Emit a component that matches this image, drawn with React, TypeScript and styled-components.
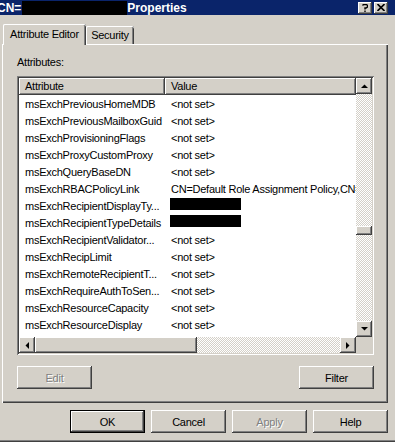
import React from "react";
import styled, { createGlobalStyle, css } from "styled-components";

const face = "#d4d0c8";

const GlobalStyle = createGlobalStyle`
  html, body {
    margin: 0;
    padding: 0;
    background: ${face};
  }
`;

const raised = css`
  background: ${face};
  box-shadow: inset -1px -1px #404040, inset 1px 1px #fff,
    inset -2px -2px #808080, inset 2px 2px ${face};
`;

const checker = css`
  background-color: #fff;
  background-image: repeating-conic-gradient(${face} 0% 25%, #fff 0% 50%);
  background-size: 2px 2px;
`;

const Window = styled.div`
  width: 395px;
  height: 442px;
  box-sizing: border-box;
  background: ${face};
  display: flex;
  flex-direction: column;
  box-shadow: inset 0 -1px #404040, inset 0 -2px #808080;
  font-family: "Liberation Sans", Arial, sans-serif;
  font-size: 11px;
  letter-spacing: -0.25px;
  color: #000;
  overflow: hidden;
`;

const TitleBar = styled.div`
  height: 15px;
  display: flex;
  align-items: center;
  background: #0a246a;
  color: #fff;
  padding-right: 7px;
`;

const TitleText = styled.div`
  display: flex;
  align-items: center;
  margin-left: -3px;
  font-size: 12px;
  font-weight: bold;
  letter-spacing: 0;
  white-space: nowrap;
`;

const TitleRedact = styled.span`
  display: inline-block;
  width: 105px;
  height: 14px;
  background: #000;
  margin-left: 1px;
`;

const CaptionButtons = styled.div`
  margin-left: auto;
  display: flex;
  gap: 2px;
`;

const CaptionButton = styled.div`
  ${raised};
  width: 14px;
  height: 12px;
  display: flex;
  align-items: center;
  justify-content: center;
  color: #000;
`;

const Body = styled.div`
  flex: 1;
  display: flex;
  flex-direction: column;
  padding: 0 7px 0 2px;
`;

const TabStrip = styled.div`
  display: flex;
  align-items: flex-end;
  height: 21px;
  margin-top: 9px;
  margin-bottom: -1px;
  padding-left: 1px;
  position: relative;
  z-index: 1;
`;

const Tab = styled.div<{ $active?: boolean; $w: number }>`
  width: ${(p) => p.$w}px;
  height: ${(p) => (p.$active ? 21 : 18)}px;
  margin-bottom: ${(p) => (p.$active ? 0 : 1)}px;
  box-sizing: border-box;
  background: ${face};
  border-top-left-radius: 2px;
  border-top-right-radius: 2px;
  box-shadow: inset 1px 0 #fff, inset 0 1px #fff, inset -1px 0 #404040,
    inset -2px 0 #808080;
  display: flex;
  justify-content: center;
  padding-top: ${(p) => (p.$active ? 4 : 3)}px;
  line-height: 13px;
  white-space: nowrap;
`;

const TabPage = styled.div`
  height: 359px;
  box-sizing: border-box;
  padding: 11px 14px 0 15px;
  display: flex;
  flex-direction: column;
  box-shadow: inset 1px 1px #fff, inset -1px -1px #404040,
    inset -2px -2px #808080;
`;

const Label = styled.div`
  height: 14px;
  line-height: 14px;
  margin-bottom: 7px;
`;

const ListBox = styled.div`
  height: 279px;
  box-sizing: border-box;
  padding: 2px;
  background: #fff;
  box-shadow: inset 1px 1px #808080, inset -1px -1px #fff,
    inset 2px 2px #404040, inset -2px -2px ${face};
  display: grid;
  grid-template-columns: 1fr 16px;
  grid-template-rows: 1fr 16px;
`;

const Viewport = styled.div`
  overflow: hidden;
  background: #fff;
`;

const HeaderRow = styled.div`
  display: flex;
  height: 17px;
`;

const HeaderCell = styled.div<{ $w?: number }>`
  ${raised};
  box-shadow: inset -1px -1px #404040, inset 1px 1px #fff,
    inset -2px -2px #808080;
  ${(p) => (p.$w ? `width: ${p.$w}px;` : "flex: 1;")}
  flex-shrink: 0;
  box-sizing: border-box;
  padding-left: 6px;
  line-height: 16px;
  white-space: nowrap;
`;

const Row = styled.div`
  display: flex;
  height: 17px;
  align-items: center;
  white-space: nowrap;
`;

const NameCell = styled.div`
  width: 146px;
  flex-shrink: 0;
  box-sizing: border-box;
  padding-left: 6px;
  overflow: hidden;
`;

const ValueCell = styled.div`
  padding-left: 6px;
  align-self: stretch;
  display: flex;
  align-items: center;
`;

const Redacted = styled.div`
  width: 71px;
  height: 12px;
  background: #000;
  margin-left: -1px;
  align-self: flex-start;
  margin-top: 1px;
`;

const VScroll = styled.div`
  display: flex;
  flex-direction: column;
`;

const HScroll = styled.div`
  display: flex;
`;

const ArrowButton = styled.div`
  ${raised};
  width: 16px;
  height: 16px;
  flex-shrink: 0;
  display: flex;
  align-items: center;
  justify-content: center;
`;

const Track = styled.div<{ $vertical?: boolean }>`
  ${checker};
  flex: 1;
  display: flex;
  flex-direction: ${(p) => (p.$vertical ? "column" : "row")};
`;

const Thumb = styled.div<{ $offset: number; $size: number; $vertical?: boolean }>`
  ${raised};
  flex-shrink: 0;
  ${(p) =>
    p.$vertical
      ? `margin-top: ${p.$offset}px; height: ${p.$size}px;`
      : `margin-left: ${p.$offset}px; width: ${p.$size}px;`}
`;

const Corner = styled.div`
  background: ${face};
`;

const PanelButtons = styled.div`
  display: flex;
  justify-content: space-between;
  margin-top: 11px;
`;

const DialogButtons = styled.div`
  display: flex;
  justify-content: flex-end;
  gap: 6px;
  margin-top: 7px;
`;

const Button = styled.div<{ $default?: boolean; $disabled?: boolean }>`
  ${raised};
  width: 75px;
  height: 23px;
  display: flex;
  align-items: center;
  justify-content: center;
  ${(p) =>
    p.$default &&
    `box-shadow: inset 0 0 0 1px #000, inset -2px -2px #404040, inset 2px 2px #fff, inset -3px -3px #808080;`}
  ${(p) =>
    p.$disabled &&
    `color: #808080; text-shadow: 1px 1px #fff;`}
`;

const Arrow: React.FC<{ dir: "up" | "down" | "left" | "right" }> = ({ dir }) => {
  const pts = {
    up: "0,4 7,4 3.5,0.5",
    down: "0,0 7,0 3.5,3.5",
    left: "4,0 4,7 0.5,3.5",
    right: "0,0 0,7 3.5,3.5",
  }[dir];
  const vertical = dir === "up" || dir === "down";
  return (
    <svg width={vertical ? 7 : 4} height={vertical ? 4 : 7} viewBox={vertical ? "0 0 7 4" : "0 0 4 7"}>
      <polygon points={pts} fill="#000" />
    </svg>
  );
};

const rows: [string, string | null][] = [
  ["msExchPreviousHomeMDB", "<not set>"],
  ["msExchPreviousMailboxGuid", "<not set>"],
  ["msExchProvisioningFlags", "<not set>"],
  ["msExchProxyCustomProxy", "<not set>"],
  ["msExchQueryBaseDN", "<not set>"],
  ["msExchRBACPolicyLink", "CN=Default Role Assignment Policy,CN=RBAC,CN=Organization"],
  ["msExchRecipientDisplayTy...", null],
  ["msExchRecipientTypeDetails", null],
  ["msExchRecipientValidator...", "<not set>"],
  ["msExchRecipLimit", "<not set>"],
  ["msExchRemoteRecipientT...", "<not set>"],
  ["msExchRequireAuthToSen...", "<not set>"],
  ["msExchResourceCapacity", "<not set>"],
  ["msExchResourceDisplay", "<not set>"],
  ["msExchResourceGUID", "<not set>"],
];

export default function App() {
  return (
    <>
      <GlobalStyle />
      <Window>
        <TitleBar>
          <TitleText>
            CN=
            <TitleRedact />
            Properties
          </TitleText>
          <CaptionButtons>
            <CaptionButton>
              <svg width="6" height="8" viewBox="0 0 6 8">
                <path d="M0.5 1.5 L1.5 0.5 H4.5 L5.5 1.5 V3 L4 4 H3 V5.5 M3 6.5 V8" stroke="#000" strokeWidth="1.4" fill="none" />
              </svg>
            </CaptionButton>
            <CaptionButton>
              <svg width="8" height="7" viewBox="0 0 8 7">
                <path d="M0.5 0 L7.5 7 M7.5 0 L0.5 7" stroke="#000" strokeWidth="1.6" />
              </svg>
            </CaptionButton>
          </CaptionButtons>
        </TitleBar>
        <Body>
          <TabStrip>
            <Tab $active $w={83}>Attribute Editor</Tab>
            <Tab $w={48}>Security</Tab>
          </TabStrip>
          <TabPage>
            <Label>Attributes:</Label>
            <ListBox>
              <Viewport>
                <HeaderRow>
                  <HeaderCell $w={146}>Attribute</HeaderCell>
                  <HeaderCell>Value</HeaderCell>
                </HeaderRow>
                {rows.map(([name, value]) => (
                  <Row key={name}>
                    <NameCell>{name}</NameCell>
                    <ValueCell>{value === null ? <Redacted /> : value}</ValueCell>
                  </Row>
                ))}
              </Viewport>
              <VScroll>
                <ArrowButton>
                  <Arrow dir="up" />
                </ArrowButton>
                <Track $vertical>
                  <Thumb $vertical $offset={132} $size={9} />
                </Track>
                <ArrowButton>
                  <Arrow dir="down" />
                </ArrowButton>
              </VScroll>
              <HScroll>
                <ArrowButton>
                  <Arrow dir="left" />
                </ArrowButton>
                <Track>
                  <Thumb $offset={0} $size={162} />
                </Track>
                <ArrowButton>
                  <Arrow dir="right" />
                </ArrowButton>
              </HScroll>
              <Corner />
            </ListBox>
            <PanelButtons>
              <Button $disabled>Edit</Button>
              <Button>Filter</Button>
            </PanelButtons>
          </TabPage>
          <DialogButtons>
            <Button $default>OK</Button>
            <Button>Cancel</Button>
            <Button $disabled>Apply</Button>
            <Button>Help</Button>
          </DialogButtons>
        </Body>
      </Window>
    </>
  );
}
